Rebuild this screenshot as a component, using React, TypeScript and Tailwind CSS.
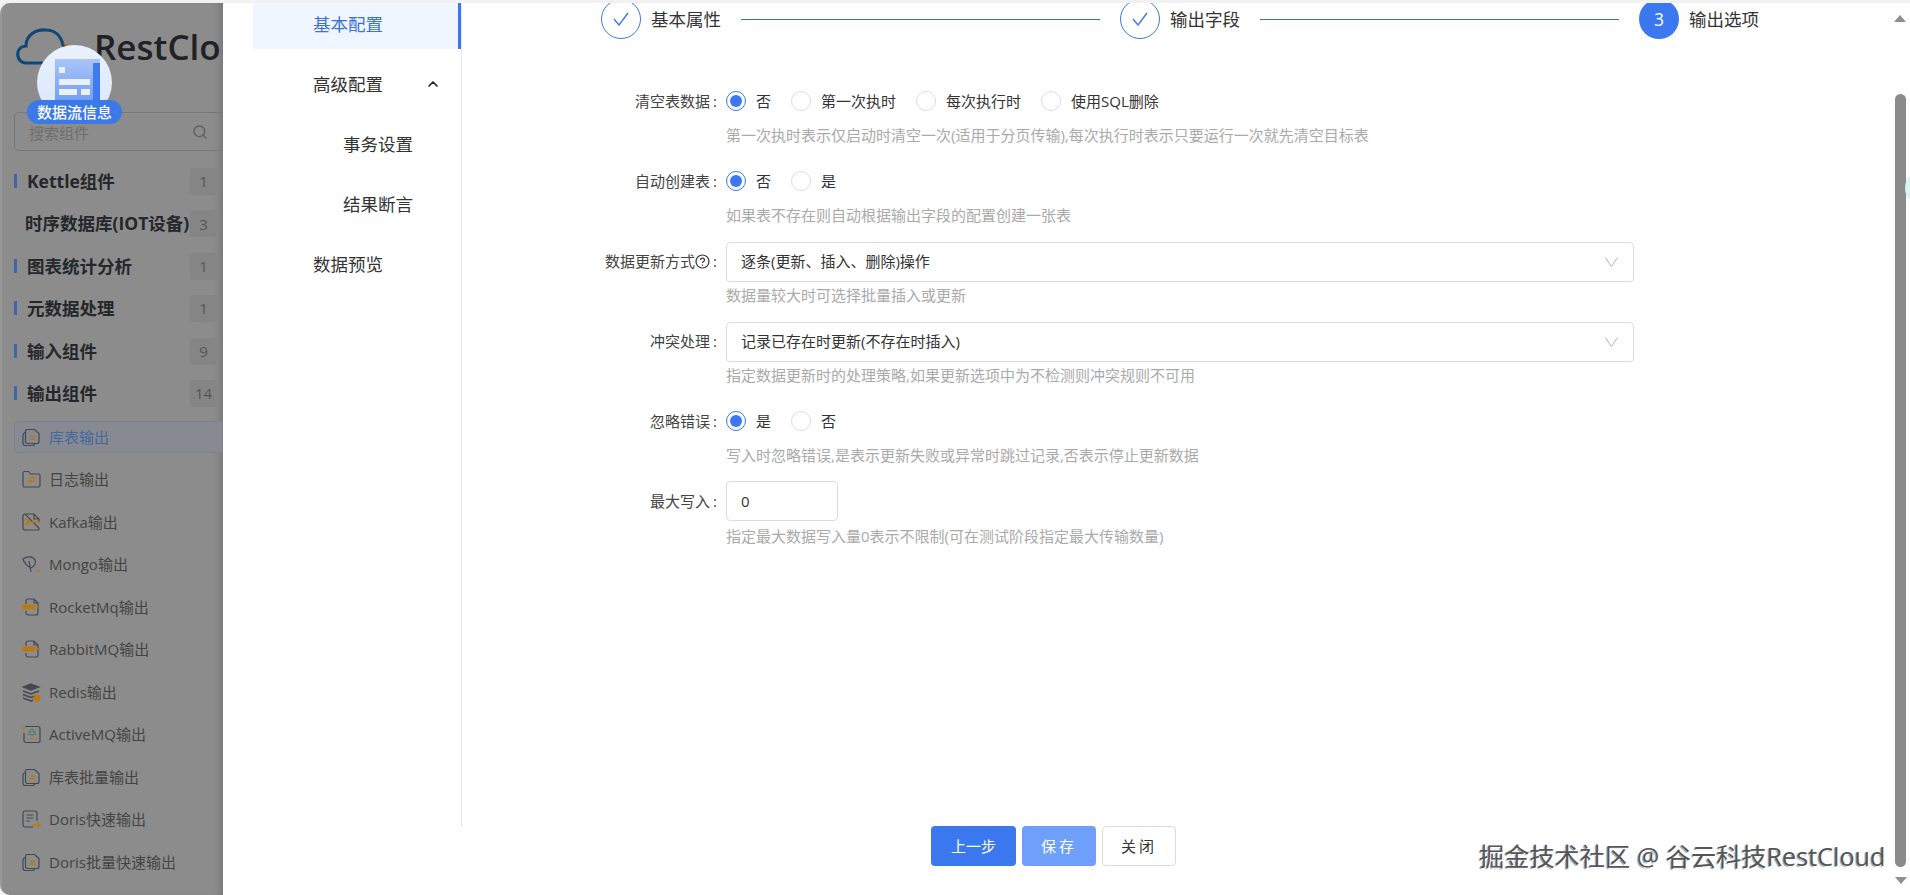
import { ChevronUp, Search } from "lucide-react";

const groups = [
  { name: "Kettle组件", count: 1, bar: true },
  { name: "时序数据库(IOT设备)", count: 3, bar: false },
  { name: "图表统计分析", count: 1, bar: true },
  { name: "元数据处理", count: 1, bar: true },
  { name: "输入组件", count: 9, bar: true },
  { name: "输出组件", count: 14, bar: true },
];

const outputs = [
  { name: "库表输出", icon: "stack", active: true },
  { name: "日志输出", icon: "folder" },
  { name: "Kafka输出", icon: "kafka" },
  { name: "Mongo输出", icon: "mongo" },
  { name: "RocketMq输出", icon: "mq" },
  { name: "RabbitMQ输出", icon: "mq" },
  { name: "Redis输出", icon: "redis" },
  { name: "ActiveMQ输出", icon: "active" },
  { name: "库表批量输出", icon: "stack" },
  { name: "Doris快速输出", icon: "doris" },
  { name: "Doris批量快速输出", icon: "stack" },
];

const ink = "#434852";
const amber = "#b97a12";

const ItemIcon = ({ type }: { type: string }) => {
  return (
    <svg width="19" height="19" viewBox="0 0 19 19" fill="none" stroke={ink} strokeWidth="1.2" className="shrink-0">
      {type === "stack" && (
        <>
          <path d="M3 4.500C1.600 5 1 6 1 7v8c0 1.500 1 2.500 2.500 2.500h7c1 0 2-.6 2.300-1.500" />
          <path d="M5 1.500h7.500l4.500 4v8c0 1.200-.8 2-2 2H5.500c-1.200 0-2-.8-2-2V3.500c0-1.200.6-2 1.500-2z" />
          <path d="M8 8h5M8 11h5" stroke={amber} strokeWidth="1.400" />
        </>
      )}
      {type === "folder" && (
        <>
          <path d="M1 3c0-1 .6-1.500 1.500-1.500h4l2 2.500h8c1 0 1.500.6 1.500 1.500v10c0 1-.6 1.500-1.500 1.500h-14C1.600 17 1 16.400 1 15.500z" />
          <path d="M6 8h6l-2-1.500M13 11H7l2 1.500" stroke={amber} strokeWidth="1.300" />
        </>
      )}
      {type === "kafka" && (
        <>
          <path d="M3 1h9l5 5v4M17 15v1c0 .6-.4 1-1 1H3c-1 0-2-.6-2-2V3c0-1 1-2 2-2zM12 1v5h5" />
          <path d="M4 6l5 3-5 3M4 9h14" stroke={amber} strokeWidth="1.400" />
          <circle cx="4" cy="6" r="1" fill={amber} stroke="none" />
          <circle cx="4" cy="12" r="1" fill={amber} stroke="none" />
        </>
      )}
      {type === "mongo" && (
        <>
          <path d="M1 4c4-3 10-3 12 1 1.500 3-1 7-4 8-3-1-7-5-8-9zM7 6l2 11" />
          <path d="M13 16h5" stroke={amber} strokeWidth="1.600" />
        </>
      )}
      {type === "mq" && (
        <>
          <path d="M4 6V3c0-1 .8-2 2-2h6l4 4v10c0 1-.8 2-2 2H6c-1.200 0-2-1-2-2v-2M12 1v4h4" />
          <rect x="0" y="6.500" width="13" height="5" fill={amber} stroke="none" />
          <path d="M14 9h4" stroke={amber} strokeWidth="1.300" />
        </>
      )}
      {type === "redis" && (
        <>
          <path d="M9 1l8 3-8 3-8-3z" fill={ink} />
          <path d="M1 8l8 3 8-3M1 11.500l8 3 4-1.500M1 15l8 3 2-.7" strokeWidth="1.500" />
          <circle cx="15" cy="15" r="3.500" fill={amber} stroke="none" />
        </>
      )}
      {type === "active" && (
        <>
          <path d="M3 1.500h13c1 0 2 .8 2 2v12c0 1-1 2-2 2H4c-1 0-2-1-2-2V8" />
          <path d="M10 4l3 3h-1.500l2 2.500H6.500l2-2.500H7zM10 9.500v2" stroke="#5d7f6c" />
          <path d="M5 14h10" stroke={amber} strokeDasharray="1.500 .8" />
          <path d="M1.500 6V3M.5 4l1-1.200 1 1.200" stroke={amber} />
        </>
      )}
      {type === "doris" && (
        <>
          <path d="M11 17H3c-1 0-2-1-2-2V3c0-1 1-2 2-2h10c1 0 2 1 2 2v8" />
          <path d="M4.500 5h7M4.500 8h7M4.500 11h3.500" />
          <path d="M10 15h8M15.500 12.500L18 15l-2.500 2.500" stroke={amber} strokeWidth="1.400" />
        </>
      )}
    </svg>
  );
};

const Sidebar = () => (
  <aside className="w-[223px] h-full shrink-0 bg-[#8c8c8c] rounded-l-[10px] border-l-2 border-[#999999] pl-[12px] overflow-hidden shadow-[inset_-8px_0_8px_-6px_rgba(0,0,0,0.18)]">
    <div className="flex items-center h-[109px] pb-[22px]">
      <svg width="56" height="40" viewBox="0 0 56 40" fill="none" className="shrink-0 mt-[1px] ml-[1px] mr-[24px]">
        <path d="M11 36C1 36 -1 20 11 19C11 8 21 2 31 3C40 3 46 9 48 18C52 19 54 24 53 36Z" stroke="#0f4877" strokeWidth="3.200" />
        <path d="M48 16l6 1-3 3z" fill="#a77a1c" />
      </svg>
      <span className="text-[35px] font-semibold text-[#202225] leading-none whitespace-nowrap -ml-[1px]">RestCloud</span>
    </div>
    <div className="h-[39px] w-[209px] border border-[#777777] rounded-[5px] flex items-center justify-between pl-[14px] pr-[14px]">
      <span className="text-[15px] text-[#6e6e6e] mt-[3px]">搜索组件</span>
      <Search size={16} color="#5d5d5d" className="mt-[1px]" />
    </div>
    <div className="mt-[9px]">
      {groups.map((g) => (
        <div key={g.name} className="h-[42.400px] flex items-center relative">
          {g.bar && <span className="w-[2.500px] h-[14px] bg-[#3f66ad] shrink-0 mr-[10.500px]"></span>}
          <span className={g.bar ? "text-[17.500px] font-bold text-[#25272b] whitespace-nowrap" : "text-[17.500px] font-bold text-[#25272b] whitespace-nowrap pl-[11px]"}>
            {g.name}
          </span>
          <span className="absolute left-[176px] top-[8px] w-[27px] h-[27px] bg-[#858585] rounded-[3px] flex items-center justify-center text-[15px] text-[#555555]">
            {g.count}
          </span>
        </div>
      ))}
    </div>
    <div className="mt-[1.600px]">
      {outputs.map((o) => (
        <div key={o.name} className="h-[42.500px] flex items-center">
          <div
            className={
              o.active
                ? "flex items-center w-[240px] h-[32px] pl-[7px] border border-[#7a8190] bg-[#878a91] rounded-l-[4px]"
                : "flex items-center w-[240px] h-[32px] pl-[8px]"
            }
          >
            <ItemIcon type={o.icon} />
            <span className={o.active ? "ml-[8px] text-[15px] text-[#44679f] whitespace-nowrap" : "ml-[8px] text-[15px] text-[#444444] whitespace-nowrap"}>
              {o.name}
            </span>
          </div>
        </div>
      ))}
    </div>
  </aside>
);

const navRows = [
  { label: "基本配置", pad: "pl-[60px]", active: true },
  { label: "高级配置", pad: "pl-[60px]", chevron: true },
  { label: "事务设置", pad: "pl-[90px]" },
  { label: "结果断言", pad: "pl-[90px]" },
  { label: "数据预览", pad: "pl-[60px]" },
];

const SideNav = () => (
  <nav className="w-[239px] h-[824px] shrink-0 border-r border-[#e8e8e8] pl-[30px] flex flex-col gap-[14px]">
    {navRows.map((row) => (
      <div
        key={row.label}
        className={
          row.active
            ? `h-[46px] shrink-0 flex items-center pb-[4px] text-[17.500px] text-[#3f70d8] bg-[#f0f6ff] border-r-[3px] border-[#3b78e8] ${row.pad}`
            : `h-[46px] shrink-0 flex items-center pb-[4px] text-[17.500px] text-[#333333] ${row.pad}`
        }
      >
        {row.label}
        {row.chevron && <ChevronUp size={16} strokeWidth={2.500} color="#222222" className="ml-[42px]" />}
      </div>
    ))}
  </nav>
);

const StepDone = ({ label }: { label: string }) => (
  <>
    <span className="w-[40px] h-[40px] shrink-0 rounded-full border border-[#3b78e8] flex items-center justify-center">
      <svg width="16" height="14" viewBox="0 0 16 14" fill="none" stroke="#3b78e8" strokeWidth="1.400">
        <path d="M1 7l5 6L15 1" />
      </svg>
    </span>
    <span className="ml-[10px] text-[17.500px] text-[#333333] whitespace-nowrap">{label}</span>
    <span className="flex-1 h-[1px] bg-[#3b6fc4] mx-[20px]"></span>
  </>
);

const Stepper = () => (
  <div className="flex items-center h-[40px] w-[1158px] ml-[139px] -mt-[4px]">
    <StepDone label="基本属性" />
    <StepDone label="输出字段" />
    <span className="w-[40px] h-[40px] shrink-0 rounded-full bg-[#3b78f0] text-white text-[17.500px] flex items-center justify-center">3</span>
    <span className="ml-[10px] text-[17.500px] text-[#333333] whitespace-nowrap">输出选项</span>
  </div>
);

const Radio = ({ label, checked }: { label: string; checked?: boolean }) => (
  <label className="flex items-center mr-[20px]">
    <span className={checked ? "w-[20px] h-[20px] rounded-full border border-[#3b78e8] flex items-center justify-center" : "w-[20px] h-[20px] rounded-full border border-[#dddddd]"}>
      {checked && <span className="w-[12px] h-[12px] rounded-full bg-[#3b78f0]"></span>}
    </span>
    <span className="ml-[10px] text-[15px] text-[#333333] whitespace-nowrap">{label}</span>
  </label>
);

const Row = ({ label, help, tip, height, gap, lift, children }: { label: string; help: string; tip?: boolean; height: string; gap: string; lift?: boolean; children: React.ReactNode }) => (
  <div className={`flex ${height}`}>
    <div className={lift ? "w-[255px] h-[40px] pb-[2px] flex items-center justify-end text-[15px] text-[#444444] shrink-0" : "w-[255px] h-[40px] flex items-center justify-end text-[15px] text-[#444444] shrink-0"}>
      {label}
      {tip && (
        <svg width="15" height="15" viewBox="0 0 15 15" fill="none" stroke="#333333" strokeWidth="1.200">
          <circle cx="7.500" cy="7.500" r="6.500" />
          <path d="M5.500 6c0-2.600 4-2.600 4 0 0 1.500-2 1.500-2 3M7.500 10.500v1.200" />
        </svg>
      )}
      <span className="w-[7px] text-right">:</span>
    </div>
    <div className="ml-[9px]">
      <div className="h-[40px] flex items-center">{children}</div>
      <div className={`text-[15px] leading-[20px] text-[#aaaaaa] whitespace-nowrap ${gap}`}>{help}</div>
    </div>
  </div>
);

const SelectBox = ({ value }: { value: string }) => (
  <div className="w-[908px] h-[40px] border border-[#dcdcdc] rounded-[4px] flex items-center justify-between pl-[14px] pr-[15px] text-[15px] text-[#333333]">
    <span className="mb-[2px]">{value}</span>
    <svg width="13" height="10" viewBox="0 0 13 10" fill="none" stroke="#b5b5b5" strokeWidth="1">
      <path d="M.5 .5l6 9 6-9" />
    </svg>
  </div>
);

const Scrollbar = () => (
  <div className="w-[18px] shrink-0 h-full flex flex-col items-start pl-[2px]">
    <svg width="12" height="7" viewBox="0 0 12 7" className="mt-[12px]">
      <path d="M6 0l6 7H0z" fill="#8f8f8f" />
    </svg>
    <div className="mt-[72px] ml-[1px] w-[11px] h-[773px] bg-[#8b8b8b] rounded-full"></div>
    <svg width="12" height="7" viewBox="0 0 12 7" className="mt-[10px] ml-[1px]">
      <path d="M0 0h12L6 7z" fill="#8f8f8f" />
    </svg>
  </div>
);

export default function App() {
  return (
    <div className="w-[1910px] h-[895px] relative overflow-hidden bg-[#f2f2f2] pt-[3px] flex font-['Open_Sans','Noto_Sans_CJK_SC',sans-serif]">
      <Sidebar />
      <div className="flex-1 h-full bg-white flex min-w-0">
        <SideNav />
        <main className="flex-1 min-w-0 h-full flex flex-col overflow-hidden">
          <Stepper />
          <form className="mt-[42px] flex-1">
            <Row label="清空表数据" help="第一次执时表示仅启动时清空一次(适用于分页传输),每次执行时表示只要运行一次就先清空目标表" height="h-[80px]" gap="mt-[4px]">
              <Radio label="否" checked />
              <Radio label="第一次执时" />
              <Radio label="每次执行时" />
              <Radio label="使用SQL删除" />
            </Row>
            <Row label="自动创建表" help="如果表不存在则自动根据输出字段的配置创建一张表" height="h-[81px]" gap="mt-[4px]">
              <Radio label="否" checked />
              <Radio label="是" />
            </Row>
            <Row label="数据更新方式" tip lift help="数据量较大时可选择批量插入或更新" height="h-[80px]" gap="mt-[3px]">
              <SelectBox value="逐条(更新、插入、删除)操作" />
            </Row>
            <Row label="冲突处理" lift help="指定数据更新时的处理策略,如果更新选项中为不检测则冲突规则不可用" height="h-[79px]" gap="mt-[3px]">
              <SelectBox value="记录已存在时更新(不存在时插入)" />
            </Row>
            <Row label="忽略错误" help="写入时忽略错误,是表示更新失败或异常时跳过记录,否表示停止更新数据" height="h-[80px]" gap="mt-[4px]">
              <Radio label="是" checked />
              <Radio label="否" />
            </Row>
            <Row label="最大写入" help="指定最大数据写入量0表示不限制(可在测试阶段指定最大传输数量)" height="h-[80px]" gap="mt-[5px]">
              <div className="w-[112px] h-[40px] border border-[#dcdcdc] rounded-[4px] flex items-center pl-[14px] text-[15px] text-[#333333]">0</div>
            </Row>
          </form>
          <div className="flex pl-[469px] mb-[29px] text-[15px]">
            <button className="w-[85px] h-[40px] rounded-[4px] bg-[#3b78f0] text-white">上一步</button>
            <button className="w-[74px] h-[40px] rounded-[4px] bg-[#6ea0fb] text-white ml-[6px] tracking-[3px]">保存</button>
            <button className="w-[74px] h-[40px] rounded-[4px] border border-[#dcdcdc] bg-white text-[#333333] ml-[6px] tracking-[3px]">关闭</button>
          </div>
        </main>
        <Scrollbar />
      </div>

      {/* floating info badge above the dimmed sidebar */}
      <div className="absolute left-[37px] top-[45px] w-[75px] h-[75px] rounded-full bg-gradient-to-b from-[#eaf1fd] to-[#d9e6fb] overflow-hidden">
        <svg width="46" height="62" viewBox="0 0 46 62" className="mt-[14px] ml-[18px]">
          <defs>
            <linearGradient id="doc" x1="0" y1="0" x2="0" y2="1">
              <stop offset="0" stopColor="#a9c4f7" />
              <stop offset="1" stopColor="#5d8ff2" />
            </linearGradient>
          </defs>
          <rect x="0" y="0" width="45" height="60" fill="url(#doc)" />
          <rect x="38" y="4" width="7" height="56" fill="#3f7bee" />
          <rect x="4" y="8" width="6" height="6" fill="#e9f0fe" />
          <rect x="4" y="20" width="31" height="6" fill="#e9f0fe" />
          <rect x="4" y="30" width="18" height="6" fill="#e9f0fe" />
          <rect x="26" y="30" width="9" height="6" fill="#e9f0fe" />
        </svg>
      </div>
      <div className="absolute left-[27px] top-[100px] w-[95px] h-[24px] rounded-full bg-[#3b78e8] text-white text-[15px] font-medium flex items-center justify-center">数据流信息</div>

      <div className="absolute left-[1905px] top-[170px] w-[36px] h-[36px] rounded-full bg-[#d9f7f2]"></div>
      <div className="absolute left-[1479px] top-[837px] text-[25.200px] leading-[38px] text-[#555555] whitespace-nowrap [text-shadow:1px_1px_0_#ffffff,-1px_1px_1px_#999999]">掘金技术社区 @ 谷云科技RestCloud</div>
    </div>
  );
}
